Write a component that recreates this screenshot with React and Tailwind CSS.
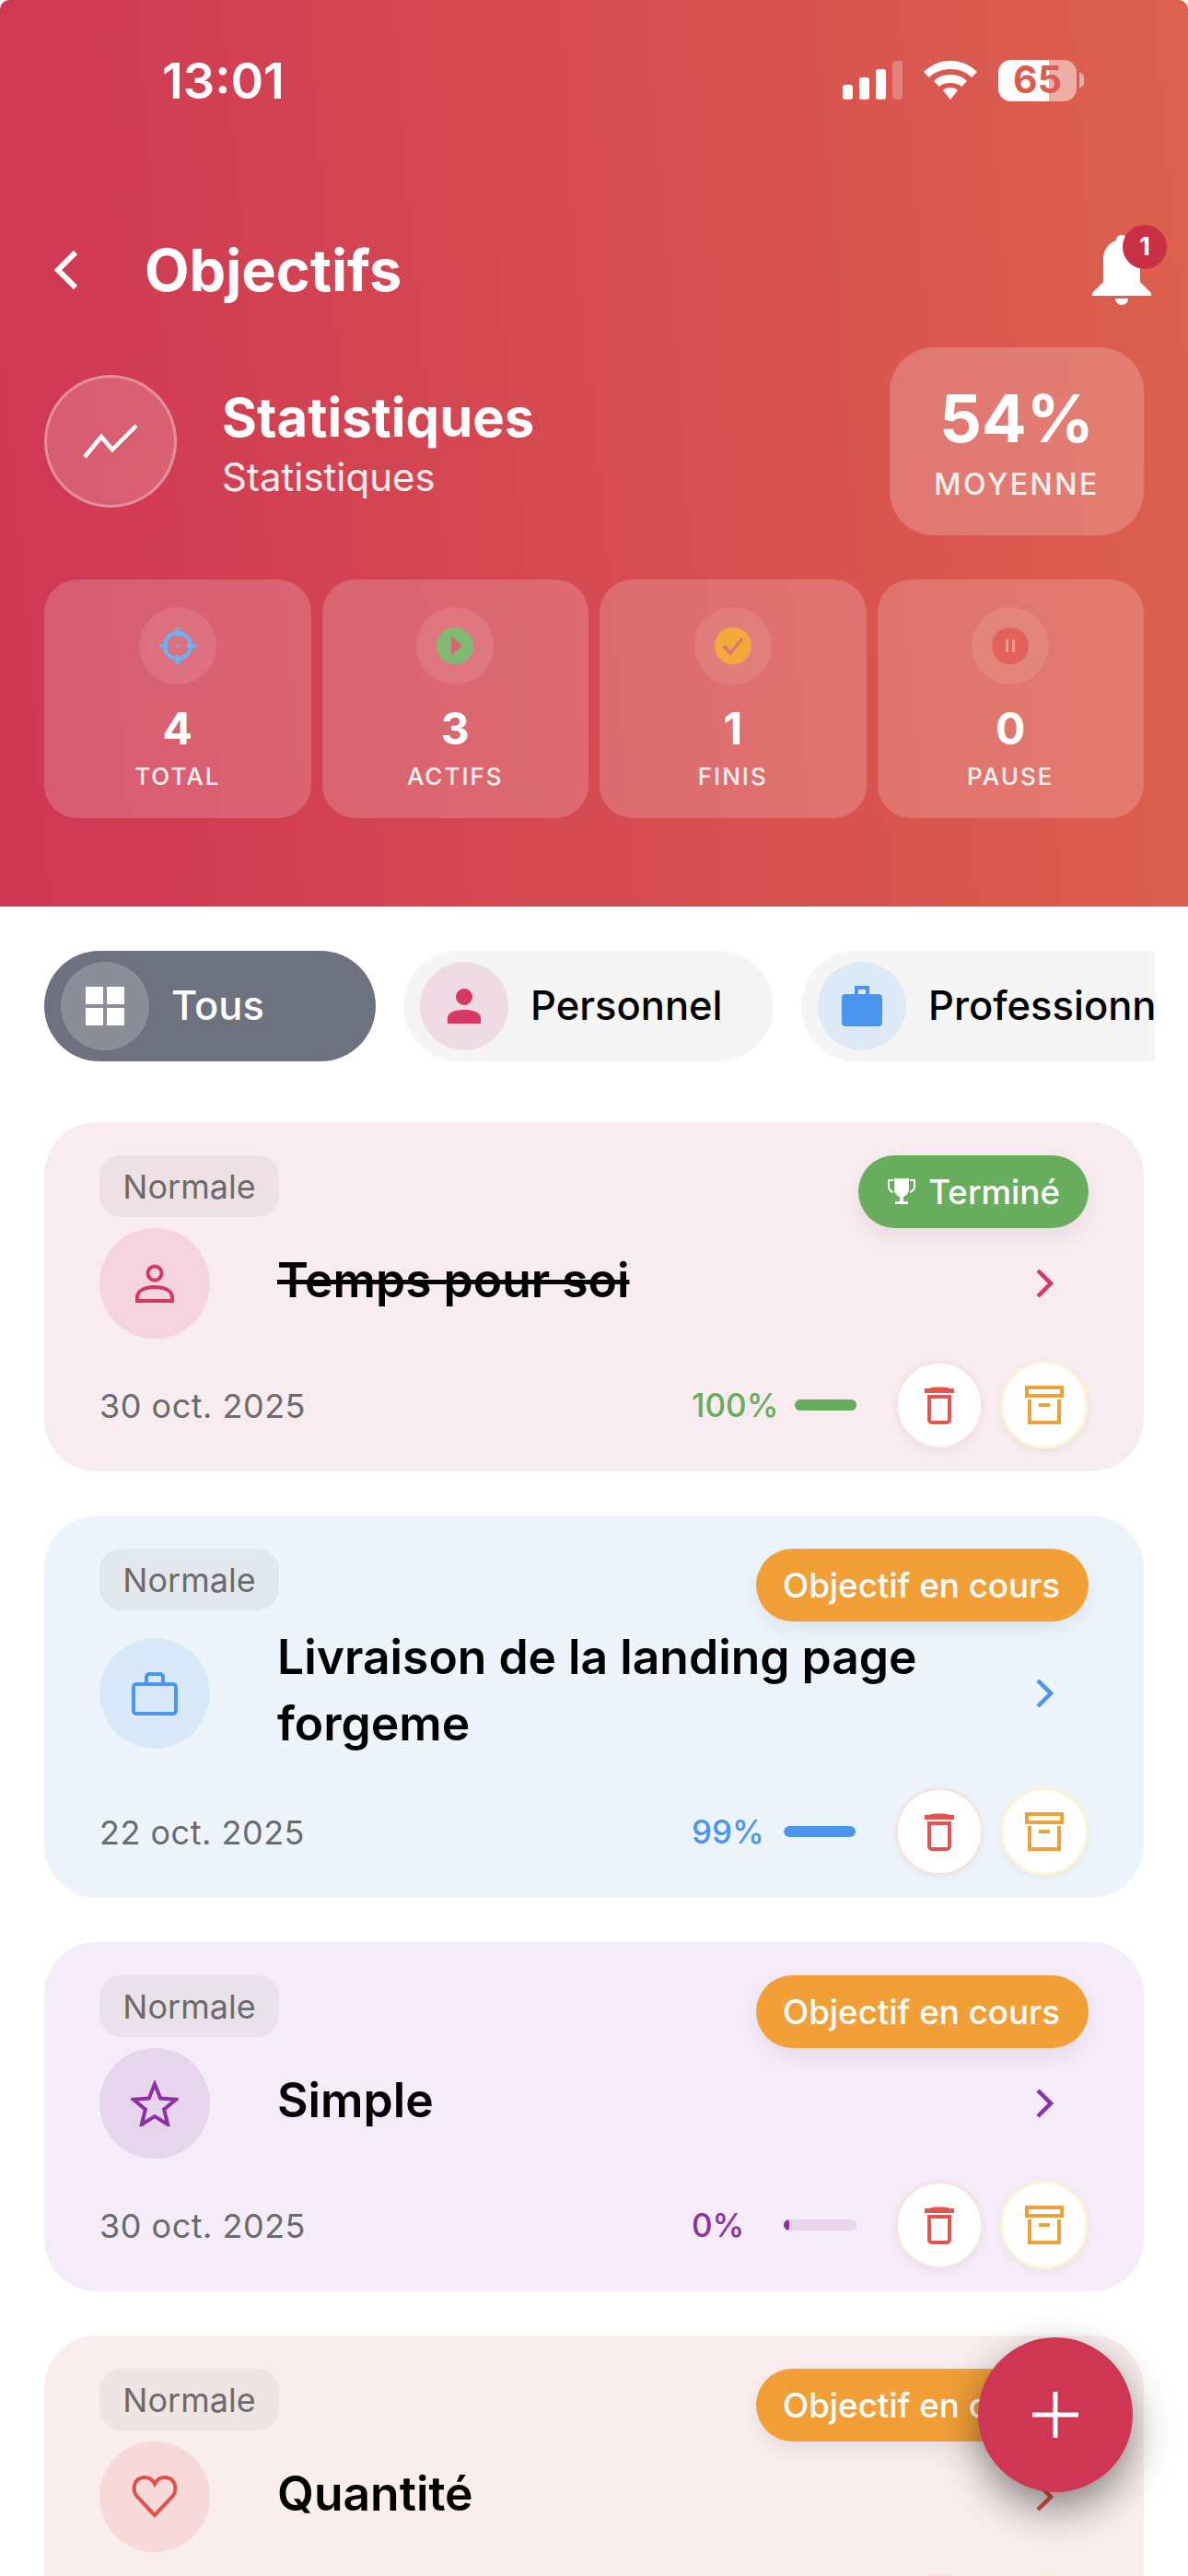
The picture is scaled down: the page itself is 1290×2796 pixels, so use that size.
import React from 'react';

const stats = [
  { value: '4', label: 'TOTAL', kind: 'target' },
  { value: '3', label: 'ACTIFS', kind: 'play' },
  { value: '1', label: 'FINIS', kind: 'check' },
  { value: '0', label: 'PAUSE', kind: 'pause' },
];

const goals = [
  {
    title: 'Temps pour soi',
    done: true,
    date: '30 oct. 2025',
    percent: 100,
    color: '#d63864',
    progressColor: '#68ad5e',
    track: '#68ad5e',
    icon: 'person',
    cardClass: 'bg-[#f9ecf0]',
    circleClass: 'bg-[#f5d3df]',
    tagClass: 'bg-[#eee0e5]',
  },
  {
    title: 'Livraison de la landing page forgeme',
    date: '22 oct. 2025',
    percent: 99,
    color: '#4a96ef',
    progressColor: '#4a96ef',
    track: '#d9e9fa',
    icon: 'briefcase',
    cardClass: 'bg-[#edf4fc]',
    circleClass: 'bg-[#d9e9fa]',
    tagClass: 'bg-[#e3e8ee]',
  },
  {
    title: 'Simple',
    date: '30 oct. 2025',
    percent: 0,
    color: '#8e2ea8',
    progressColor: '#8e2ea8',
    track: '#e6d5ec',
    icon: 'star',
    cardClass: 'bg-[#f4ecf8]',
    circleClass: 'bg-[#e6d5ec]',
    tagClass: 'bg-[#e9e2eb]',
  },
  {
    title: 'Quantité',
    date: '30 oct. 2025',
    percent: 0,
    color: '#e2504a',
    progressColor: '#e2504a',
    track: '#f6d9d8',
    icon: 'heart',
    cardClass: 'bg-[#f9eeed]',
    circleClass: 'bg-[#f6d9d8]',
    tagClass: 'bg-[#eee4e4]',
  },
];

function StatIcon({ kind }) {
  if (kind === 'target') {
    return (
      <svg width="40" height="40" viewBox="0 0 40 40" fill="none" stroke="#64b5f6" strokeWidth="4">
        <circle cx="20" cy="20" r="14" />
        <path d="M20 0v10M20 30v10M0 20h10M30 20h10" />
        <circle cx="20" cy="20" r="1.5" fill="#64b5f6" stroke="none" />
      </svg>
    );
  }
  if (kind === 'play') {
    return (
      <svg width="40" height="40" viewBox="0 0 40 40">
        <circle cx="20" cy="20" r="20" fill="#7fb974" />
        <path d="M16 10l12 10-12 10z" fill="#dc6478" />
      </svg>
    );
  }
  if (kind === 'check') {
    return (
      <svg width="40" height="40" viewBox="0 0 40 40" fill="none">
        <circle cx="20" cy="20" r="20" fill="#f4a93c" />
        <path d="M10 20l7 8 13-16" stroke="#df7570" strokeWidth="3.5" />
      </svg>
    );
  }
  return (
    <svg width="40" height="40" viewBox="0 0 40 40">
      <circle cx="20" cy="20" r="20" fill="#e2615a" />
      <path d="M15 13h3v14h-3zM22 13h3v14h-3z" fill="#ee9a92" />
    </svg>
  );
}

function GoalIcon({ kind, color }) {
  const stroke = { fill: 'none', stroke: color, strokeWidth: 4 };
  if (kind === 'person') {
    return (
      <svg width="42" height="42" viewBox="0 0 42 42" {...stroke}>
        <circle cx="21" cy="10" r="7.5" />
        <path d="M2 40v-4c0-7 8-11 19-11s19 4 19 11v4z" />
      </svg>
    );
  }
  if (kind === 'briefcase') {
    return (
      <svg width="50" height="47" viewBox="0 0 50 47" {...stroke}>
        <rect x="2" y="13" width="46" height="32" rx="3" />
        <path d="M16 13V5a3 3 0 0 1 3-3h12a3 3 0 0 1 3 3v8" />
      </svg>
    );
  }
  if (kind === 'star') {
    return (
      <svg width="52" height="50" viewBox="0 0 52 50" {...stroke}>
        <path d="M26 4l6.2 15.600 16.800 1.200-12.900 10.800 4.100 16.400L26 39l-14.200 9 4.100-16.400L3 20.800l16.800-1.200z" />
      </svg>
    );
  }
  return (
    <svg width="52" height="48" viewBox="0 0 52 48" {...stroke}>
      <path d="M26 44L7 24C1 17 3 4 14 3c6-.4 10 3 12 7 2-4 6-7.400 12-7 11 1 13 14 7 21z" />
    </svg>
  );
}

function TrashIcon() {
  return (
    <svg width="32" height="41" viewBox="0 0 32 41" fill="none">
      <path d="M0 2h32v5H0zM5 2c1-2 21-2 22 0z" fill="#e2544e" />
      <path d="M5 11h22v25a3 3 0 0 1-3 3H8a3 3 0 0 1-3-3z" stroke="#e2544e" strokeWidth="4" />
    </svg>
  );
}

function ArchiveIcon() {
  return (
    <svg width="42" height="42" viewBox="0 0 42 42" fill="none" stroke="#eba23b" strokeWidth="4">
      <path d="M2 2h38v9H2zM5 15v25h32V15" />
      <path d="M15 21h12" />
    </svg>
  );
}

function GoalCard({ goal }) {
  return (
    <div className={`relative rounded-[57px] px-[60px] pt-[36px] pb-[24px] ${goal.cardClass}`}>
      <div className="flex">
        <span className={`flex h-[67px] w-[195px] items-center justify-center rounded-[24px] pt-[1px] text-[36px] text-[#6b6b6b] ${goal.tagClass}`}>
          Normale
        </span>
      </div>

      {goal.done ? (
        <span className="absolute right-[60px] top-[36px] flex h-[79px] items-center gap-[14px] rounded-full bg-[#68ad5e] pl-[32px] pr-[31px] text-[36.700px] font-medium text-white shadow-[0_9px_24px_rgba(0,0,0,0.07)]">
          <svg width="30" height="30" viewBox="0 0 30 30" fill="white">
            <path d="M7 0h16v11c0 5-3 8-6 9v5h5v3H8v-3h5v-5c-3-1-6-4-6-9z" />
            <path d="M6 2H1v7c0 3 2 5 5 6M24 2h5v7c0 3-2 5-5 6" fill="none" stroke="white" strokeWidth="2" />
          </svg>
          Terminé
        </span>
      ) : (
        <span className="absolute right-[60px] top-[36px] flex h-[79px] items-center rounded-full bg-[#f29f38] pl-[29px] pr-[31px] text-[36.700px] font-medium text-white shadow-[0_9px_24px_rgba(0,0,0,0.07)]">
          Objectif en cours
        </span>
      )}

      <div className="mt-[12px] flex min-h-[120px] items-center">
        <div className={`flex h-[120px] w-[120px] shrink-0 items-center justify-center rounded-full ${goal.circleClass}`}>
          <GoalIcon kind={goal.icon} color={goal.color} />
        </div>
        <p
          className={`ml-[73px] flex-1 pt-[2px] pb-[10px] pr-[60px] text-[51.600px] font-semibold leading-[72px] text-black ${
            goal.done ? 'line-through' : ''
          }`}
        >
          {goal.title}
        </p>
        <svg className="mr-[38px] shrink-0" width="20" height="32" viewBox="0 0 20 32" fill="none" stroke={goal.color} strokeWidth="4.500">
          <path d="M3 2l14 14L3 30" />
        </svg>
      </div>

      <div className="mt-[24px] flex h-[96px] items-center">
        <span className="flex-1 pt-[2px] text-[36px] tracking-[0.5px] text-[#6b6b6b]">{goal.date}</span>
        <div className="mr-[42px] flex w-[179px] items-center">
          <span className="mr-[18px] min-w-[82px] text-[35px] font-medium" style={{ color: goal.progressColor }}>
            {goal.percent}%
          </span>
          <div className="h-[12px] flex-1 overflow-hidden rounded-full" style={{ background: goal.track }}>
            <div
              className="h-full rounded-full"
              style={{ width: `${Math.max(goal.percent, 7)}%`, background: goal.progressColor }}
            />
          </div>
        </div>
        <div className="flex gap-[18px]">
          <button className="flex h-[96px] w-[96px] items-center justify-center rounded-full border-[3px] border-[#f9e3e2] bg-white shadow-[0_3px_9px_rgba(0,0,0,0.05)]">
            <TrashIcon />
          </button>
          <button className="flex h-[96px] w-[96px] items-center justify-center rounded-full border-[3px] border-[#fdf2d2] bg-white shadow-[0_3px_9px_rgba(0,0,0,0.05)]">
            <ArchiveIcon />
          </button>
        </div>
      </div>
    </div>
  );
}

export default function App() {
  return (
    <div className="relative h-[2796px] w-[1290px] overflow-hidden bg-white font-['Inter',sans-serif]">
      <header className="h-[984px] rounded-t-[10px] bg-[linear-gradient(85deg,#cf3654,#dd614e)] px-[48px] text-white">
        {/* status bar */}
        <div className="flex h-[174px] items-center justify-between">
          <span className="ml-[128px] text-[54px] font-semibold">13:01</span>
          <div className="mr-[73px] flex items-center">
            <svg width="66" height="42" viewBox="0 0 66 42" fill="white">
              <rect x="0" y="26" width="11" height="16" rx="3" />
              <rect x="18" y="18" width="11" height="24" rx="3" />
              <rect x="36" y="9" width="11" height="33" rx="3" />
              <rect x="54" y="0" width="11" height="42" rx="3" opacity="0.25" />
            </svg>
            <svg className="ml-[22px]" width="58" height="42" viewBox="0 0 58 42" fill="white">
              <path d="M29 0c11 0 21 4 29 12l-6 6C46 12 38 9 29 9S12 12 6 18l-6-6C8 4 18 0 29 0z" />
              <path d="M29 15c7 0 13 2 18 7l-6 6c-3-3-7-4-12-4s-9 1-12 4l-6-6c5-5 11-7 18-7z" />
              <path d="M29 29c3.500 0 6 1 8 3l-8 10-8-10c2-2 4.500-3 8-3z" />
            </svg>
            <div className="relative ml-[23px] flex h-[45px] w-[85px] items-center justify-center rounded-[14px] bg-[linear-gradient(90deg,#fff_65%,rgba(255,255,255,0.5)_65%)] text-[41px] font-bold text-[#dd5c50]">
              65
              <span className="absolute -right-[8px] top-[14px] h-[16px] w-[5px] rounded-r-full bg-white/50" />
            </div>
          </div>
        </div>

        {/* title row */}
        <div className="mt-[69px] flex h-[100px] items-center justify-between">
          <div className="flex items-center">
            <svg className="ml-[10px]" width="26" height="42" viewBox="0 0 26 42" fill="none" stroke="white" strokeWidth="6">
              <path d="M24 2L5 21l19 19" />
            </svg>
            <h1 className="ml-[73px] text-[63px] font-bold">Objectifs</h1>
          </div>
          <div className="relative mr-[-8px] h-[76px] w-[64px]">
            <svg width="64" height="76" viewBox="0 0 64 76" fill="white">
              <path d="M32 0c4 0 6 3 6 6 9 3 14 11 14 21v24l12 12v3H0v-3l12-12V27c0-10 5-18 14-21 0-3 2-6 6-6z" />
              <path d="M25 69h14a7 7 0 0 1-14 0z" />
            </svg>
            <span className="absolute -right-[17px] -top-[11px] flex h-[48px] w-[48px] items-center justify-center rounded-full bg-[#c93045] text-[27px] font-bold">
              1
            </span>
          </div>
        </div>

        {/* stats summary */}
        <div className="mt-[34px] flex h-[204px] items-center justify-between">
          <div className="flex items-center">
            <div className="flex h-[144px] w-[144px] items-center justify-center rounded-full border-[3px] border-white/30 bg-white/[0.18]">
              <svg width="60" height="38" viewBox="0 0 60 38" fill="none" stroke="white" strokeWidth="4.500">
                <path d="M2 36l18-22 12 14L58 2" />
              </svg>
            </div>
            <div className="ml-[49px] pt-[3px]">
              <p className="text-[58px] font-bold leading-[70px]">Statistiques</p>
              <p className="mt-[5px] text-[42px] leading-[50px] text-white/90">Statistiques</p>
            </div>
          </div>
          <div className="flex h-[204px] w-[276px] flex-col items-center justify-center rounded-[48px] bg-white/20 pt-[4px]">
            <span className="text-[72px] font-bold leading-[84px]">54%</span>
            <span className="mt-[6px] text-[32px] font-medium tracking-[2.500px] text-white/90">MOYENNE</span>
          </div>
        </div>

        {/* stat cards */}
        <div className="mt-[48px] grid h-[259px] grid-cols-4 gap-[12px]">
          {stats.map((stat) => (
            <div key={stat.label} className="flex flex-col items-center rounded-[36px] bg-white/[0.18] pt-[30px]">
              <div className="flex h-[84px] w-[84px] items-center justify-center rounded-full bg-white/10">
                <StatIcon kind={stat.kind} />
              </div>
              <span className="mt-[18px] text-[48px] font-bold leading-[60px]">{stat.value}</span>
              <span className="mt-[2px] text-[26px] font-medium tracking-[2px] text-white/90">{stat.label}</span>
            </div>
          ))}
        </div>
      </header>

      {/* filter chips */}
      <div className="ml-[48px] mt-[48px] flex w-[1206px] gap-[30px] overflow-hidden">
        <div className="flex h-[120px] w-[360px] shrink-0 items-center rounded-full bg-[#6e7280] pl-[18px] text-[43.500px] font-medium text-white">
          <div className="flex h-[96px] w-[96px] items-center justify-center rounded-full bg-white/20">
            <div className="grid grid-cols-2 gap-[4px]">
              <span className="h-[19px] w-[19px] bg-white" />
              <span className="h-[19px] w-[19px] bg-white" />
              <span className="h-[19px] w-[19px] bg-white" />
              <span className="h-[19px] w-[19px] bg-white" />
            </div>
          </div>
          <span className="ml-[24px]">Tous</span>
        </div>
        <div className="flex h-[120px] w-[402px] shrink-0 items-center rounded-full bg-[#f5f5f5] pl-[18px] text-[43.500px] font-medium text-black">
          <div className="flex h-[96px] w-[96px] items-center justify-center rounded-full bg-[#efdbe3]">
            <svg width="36" height="38" viewBox="0 0 36 38" fill="#d63864">
              <circle cx="18" cy="9" r="9" />
              <path d="M0 38v-6c0-6 8-9 18-9s18 3 18 9v6z" />
            </svg>
          </div>
          <span className="ml-[24px]">Personnel</span>
        </div>
        <div className="flex h-[120px] w-[520px] shrink-0 items-center rounded-full bg-[#f5f5f5] pl-[18px] text-[43.500px] font-medium text-black">
          <div className="flex h-[96px] w-[96px] items-center justify-center rounded-full bg-[#dde9f6]">
            <svg width="44" height="44" viewBox="0 0 44 44" fill="#4a96ef">
              <path d="M14 9V0h16v9h10a4 4 0 0 1 4 4v27a4 4 0 0 1-4 4H4a4 4 0 0 1-4-4V13a4 4 0 0 1 4-4zm4 0h8V4h-8z" fillRule="evenodd" />
            </svg>
          </div>
          <span className="ml-[24px]">Professionnel</span>
        </div>
      </div>

      {/* goal list */}
      <div className="mt-[66px] flex flex-col gap-[48px] px-[48px]">
        {goals.map((goal) => (
          <GoalCard key={goal.title} goal={goal} />
        ))}
      </div>

      <button className="absolute left-[1062px] top-[2537px] flex h-[168px] w-[168px] items-center justify-center rounded-full bg-[#cf3654] shadow-[0_18px_45px_rgba(0,0,0,0.45)]">
        <svg width="50" height="50" viewBox="0 0 50 50" stroke="white" strokeWidth="5">
          <path d="M25 0v50M0 25h50" />
        </svg>
      </button>
    </div>
  );
}
